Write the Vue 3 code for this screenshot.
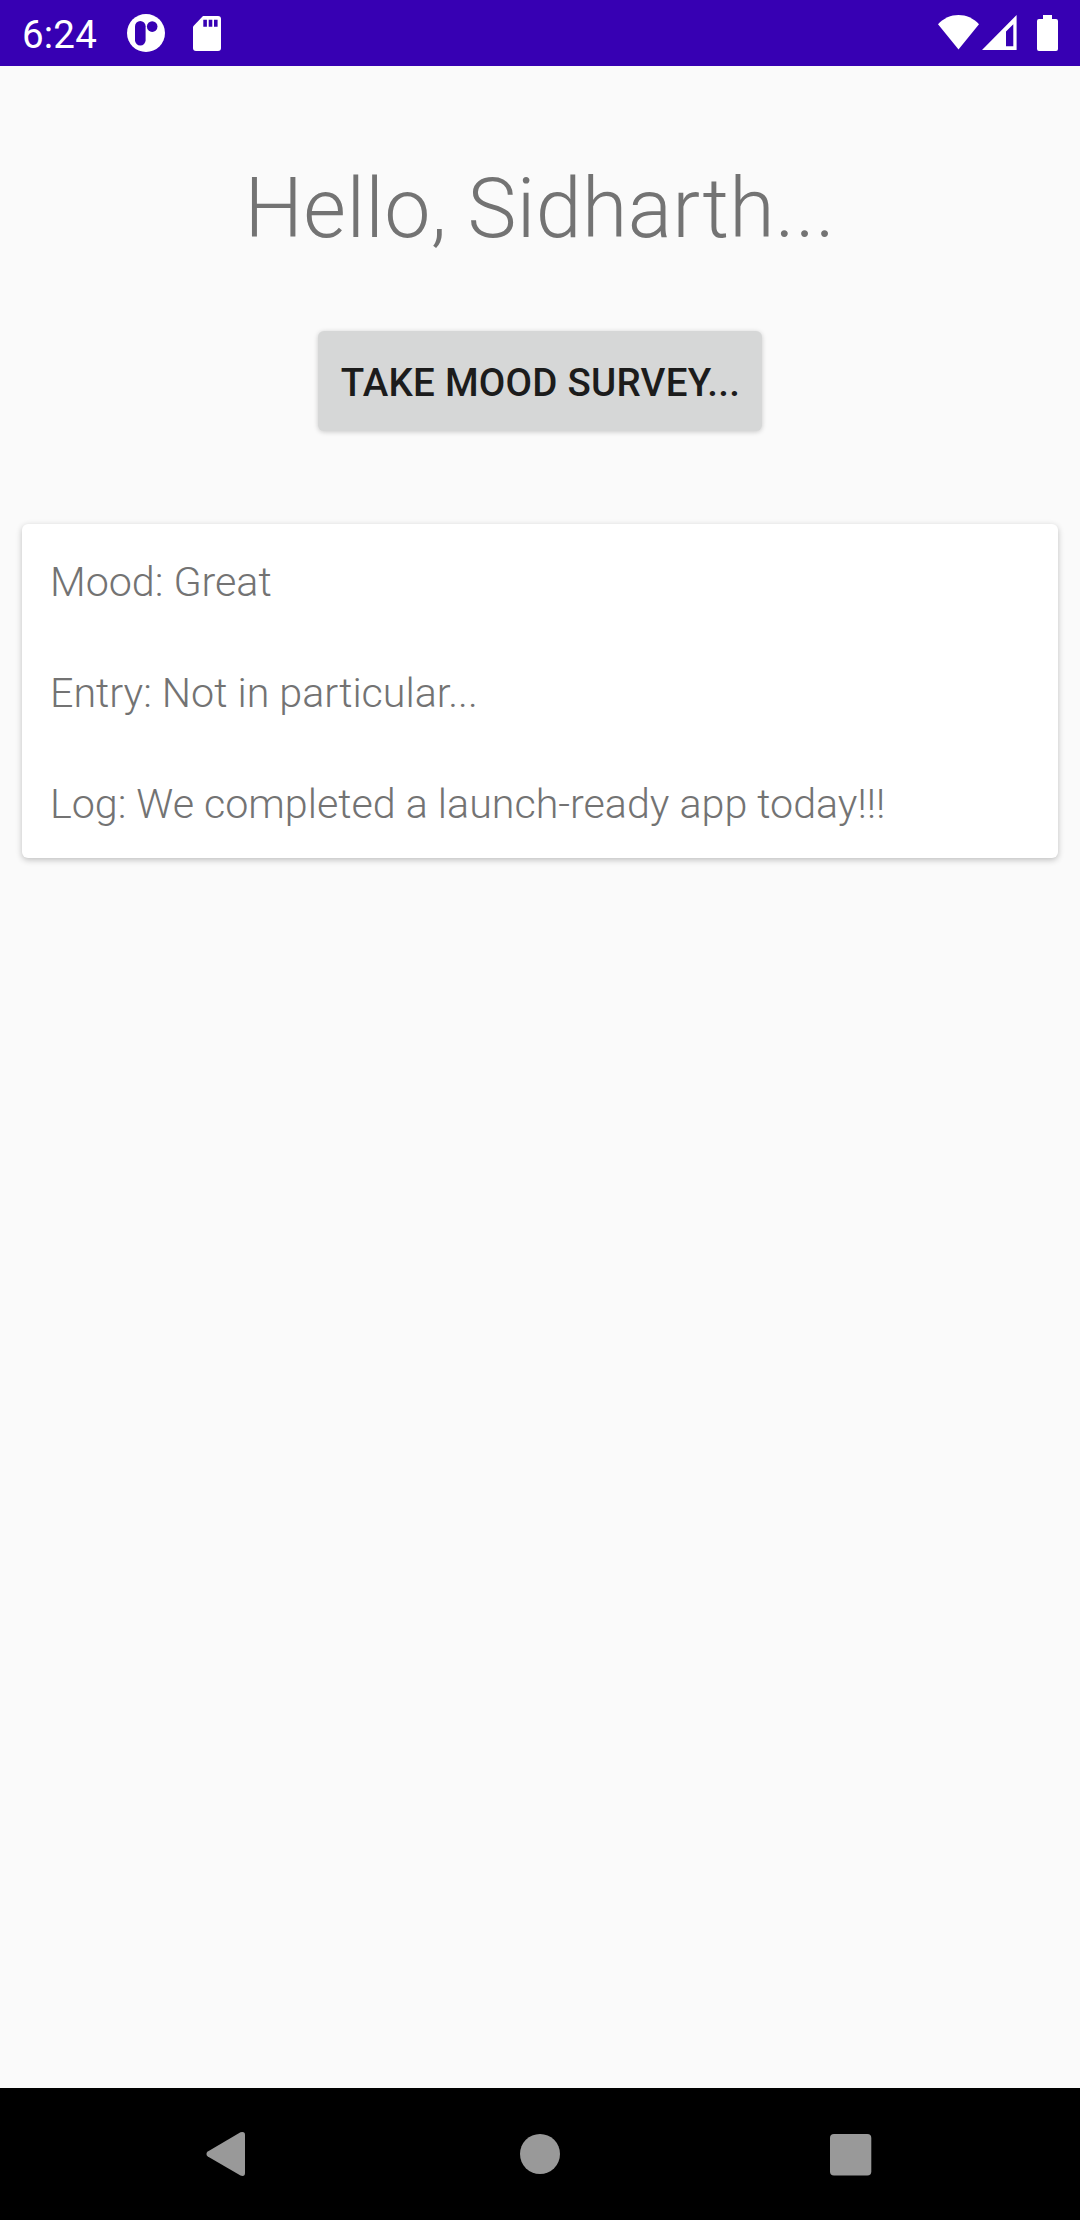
<script setup>
import { ref } from 'vue'

const time = ref('6:24')
const userName = ref('Sidharth')

const entry = ref([
    { label: 'Mood', value: 'Great' },
    { label: 'Entry', value: 'Not in particular...' },
    { label: 'Log', value: 'We completed a launch-ready app today!!!' },
])
</script>

<template>
  <div class="screen">
    <header class="status_bar">
      <span class="status_time">{{ time }}</span>
      <svg class="status_app" width="38" height="38" viewBox="0 0 38 38">
        <circle cx="19" cy="19" r="19" fill="#fff" />
        <rect x="8" y="7" width="10.6" height="24.5" rx="5.3" fill="#3700b3" />
        <circle cx="25.2" cy="12.6" r="5.3" fill="#3700b3" />
      </svg>
      <svg class="status_sd" width="28" height="35" viewBox="0 0 28 35">
        <path d="M10 0H25a3 3 0 0 1 3 3V32a3 3 0 0 1-3 3H3a3 3 0 0 1-3-3V10.4Z" fill="#fff" />
        <path d="M10.3 3.7h3.6v7h-3.6zM15.7 3.7h3.6v7h-3.6zM21 3.7h3.6v7H21z" fill="#3700b3" />
      </svg>
      <div class="status_right">
        <svg width="41" height="35" viewBox="0 0 41 35">
          <path d="M0 9.2C5.6 3.2 12.8 0 20.5 0S35.4 3.2 41 9.2L20.5 34.6Z" fill="#fff" />
        </svg>
        <svg class="status_signal" width="35" height="35" viewBox="0 0 35 35">
          <path d="M34.6 0V35H0ZM31.3 9.3L24 16.5V31.3h7.3Z" fill="#fff" fill-rule="evenodd" />
        </svg>
        <svg class="status_battery" width="21" height="36" viewBox="0 0 21 36">
          <path d="M6 0h9v4h4a2 2 0 0 1 2 2V34a2 2 0 0 1-2 2H2a2 2 0 0 1-2-2V6a2 2 0 0 1 2-2h4Z" fill="#fff" />
        </svg>
      </div>
    </header>

    <main class="content">
      <h1 class="greeting">Hello, {{ userName }}...</h1>
      <button class="survey_button">Take mood survey...</button>
      <section class="card">
        <p v-for="row in entry" :key="row.label" class="card_row">{{ row.label }}: {{ row.value }}</p>
      </section>
    </main>

    <nav class="nav_bar">
      <svg class="nav_back" width="40" height="46" viewBox="0 0 40 46">
        <path d="M34.5 1.2 1.8 20.4a3 3 0 0 0 0 5L34.5 44.6Q39 46 39 42V3.8Q39 0 34.5 1.2Z" fill="#999" />
      </svg>
      <svg class="nav_home" width="40" height="40" viewBox="0 0 40 40">
        <circle cx="20" cy="20" r="20" fill="#999" />
      </svg>
      <svg class="nav_recent" width="42" height="42" viewBox="0 0 42 42">
        <rect width="41.3" height="41.5" rx="4" fill="#999" />
      </svg>
    </nav>
  </div>
</template>

<style>
body {
    margin: 0;
    background: #fafafa;
}
</style>

<style scoped>
.screen {
    display: flex;
    flex-direction: column;
    width: 1080px;
    height: 2220px;
    background: #fafafa;
    font-family: Roboto, sans-serif;
}
svg {
    display: block;
    flex-shrink: 0;
}
.status_bar {
    display: flex;
    align-items: flex-start;
    box-sizing: border-box;
    height: 66px;
    padding: 0 22px;
    background: #3700b3;
    color: #fff;
}
.status_time {
    width: 105px;
    padding-top: 12px;
    font-size: 38.5px;
    line-height: 45px;
    letter-spacing: 0.2px;
}
.status_app {
    margin-top: 14px;
}
.status_sd {
    margin-top: 16px;
    margin-left: 28px;
}
.status_right {
    display: flex;
    margin-top: 15px;
    margin-left: auto;
}
.status_signal {
    margin-left: 3px;
}
.status_battery {
    margin-left: 20px;
}
.content {
    display: flex;
    flex: 1;
    flex-direction: column;
    align-items: center;
    padding: 94px 22px 0;
}
.greeting {
    margin: 0;
    font-size: 82.5px;
    font-weight: 300;
    line-height: 97px;
    letter-spacing: 0.38px;
    color: #737373;
}
.survey_button {
    width: 444px;
    height: 100px;
    margin-top: 74px;
    padding: 2px 0 0 1px;
    border: none;
    border-radius: 6px;
    background: #d6d7d7;
    box-shadow: 0 1px 5px rgba(0, 0, 0, 0.2);
    color: #1c1c1c;
    font-family: inherit;
    font-size: 38.5px;
    font-weight: 500;
    letter-spacing: 0.24px;
    text-transform: uppercase;
    white-space: nowrap;
}
.card {
    display: flex;
    flex-direction: column;
    gap: 63px;
    box-sizing: border-box;
    width: 1036px;
    height: 334px;
    margin-top: 93px;
    padding: 34px 28px 0;
    border-radius: 6px;
    background: #fff;
    box-shadow: 0 2px 6px rgba(0, 0, 0, 0.24);
}
.card_row {
    margin: 0;
    font-size: 41.25px;
    font-weight: 300;
    line-height: 48px;
    letter-spacing: -0.03px;
    color: #737373;
}
.nav_bar {
    display: flex;
    align-items: flex-start;
    box-sizing: border-box;
    height: 132px;
    padding-left: 206px;
    background: #000;
}
.nav_back {
    margin-top: 43px;
}
.nav_home {
    margin-top: 46px;
    margin-left: 274px;
}
.nav_recent {
    margin-top: 46px;
    margin-left: 270px;
}
</style>
